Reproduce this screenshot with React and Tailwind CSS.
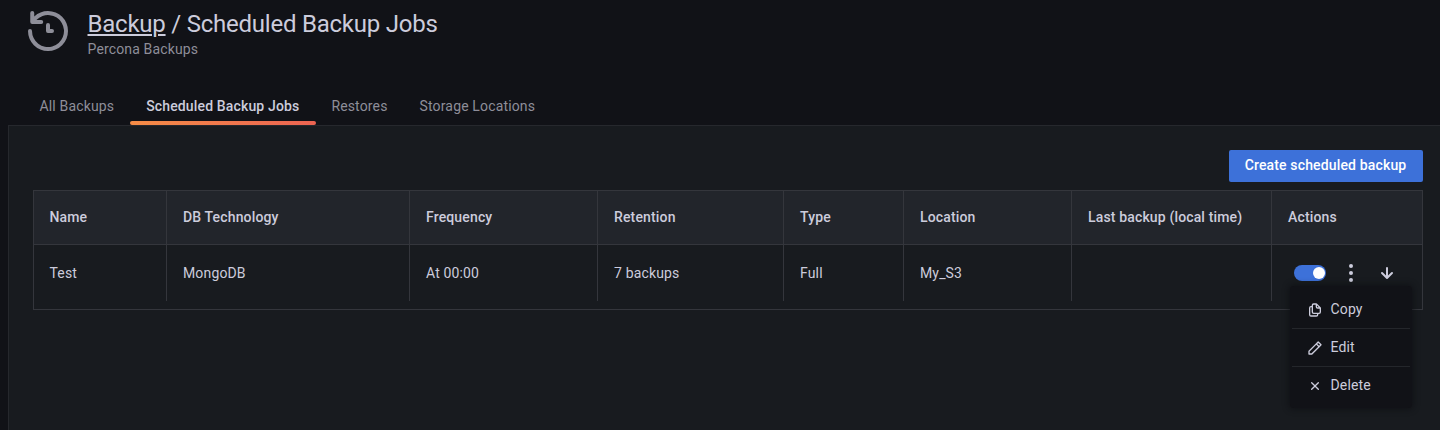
const paths = {
  history:
    'M12,2A10,10,0,0,0,5.12,4.77V3a1,1,0,0,0-2,0V7.5a1,1,0,0,0,1,1H8.62a1,1,0,0,0,0-2H6.22A8,8,0,1,1,4,12a1,1,0,0,0-2,0A10,10,0,1,0,12,2Zm0,6a1,1,0,0,0-1,1v3a1,1,0,0,0,1,1h2a1,1,0,0,0,0-2H13V9A1,1,0,0,0,12,8Z',
  copy:
    'M21,8.94a1.31,1.31,0,0,0-.06-.27l0-.09a1.07,1.07,0,0,0-.19-.28h0l-6-6h0a1.07,1.07,0,0,0-.28-.19.32.32,0,0,0-.09,0A.88.88,0,0,0,14.05,2H10A3,3,0,0,0,7,5V6H6A3,3,0,0,0,3,9V19a3,3,0,0,0,3,3h8a3,3,0,0,0,3-3V18h1a3,3,0,0,0,3-3V9S21,9,21,8.94ZM15,5.41,17.59,8H16a1,1,0,0,1-1-1ZM15,19a1,1,0,0,1-1,1H6a1,1,0,0,1-1-1V9A1,1,0,0,1,6,8H7v7a3,3,0,0,0,3,3h5Zm4-4a1,1,0,0,1-1,1H10a1,1,0,0,1-1-1V5a1,1,0,0,1,1-1h3V7a3,3,0,0,0,3,3h3Z',
  pen:
    'M22,7.24a1,1,0,0,0-.29-.71L17.47,2.29A1,1,0,0,0,16.76,2a1,1,0,0,0-.71.29L13.22,5.12h0L2.29,16.05a1,1,0,0,0-.29.71V21a1,1,0,0,0,1,1H7.24A1,1,0,0,0,8,21.71L18.87,10.78h0L21.71,8a1.19,1.19,0,0,0,.22-.33,1,1,0,0,0,0-.24.7.7,0,0,0,0-.14ZM6.83,20H4V17.17l9.93-9.93,2.83,2.83ZM18.17,8.66,15.34,5.83l1.42-1.41,2.82,2.82Z',
  times:
    'M13.41,12l4.3-4.29a1,1,0,1,0-1.42-1.42L12,10.59,7.71,6.29A1,1,0,0,0,6.29,7.71L10.59,12l-4.3,4.29a1,1,0,0,0,0,1.42,1,1,0,0,0,1.42,0L12,13.41l4.29,4.3a1,1,0,0,0,1.42,0,1,1,0,0,0,0-1.42Z',
  ellipsis: 'M12,3a2,2,0,1,0,2,2A2,2,0,0,0,12,3Zm0,7a2,2,0,1,0,2,2A2,2,0,0,0,12,10Zm0,7a2,2,0,1,0,2,2A2,2,0,0,0,12,17Z',
  arrowDown:
    'M17.71,11.29a1,1,0,0,0-1.42,0L13,14.59V7a1,1,0,0,0-2,0v7.59l-3.29-3.3a1,1,0,0,0-1.42,1.42l5,5a1,1,0,0,0,.33.21.94.94,0,0,0,.76,0,1,1,0,0,0,.33-.21l5-5A1,1,0,0,0,17.71,11.29Z',
};

function Icon({ name, className }) {
  return (
    <svg viewBox="0 0 24 24" fill="currentColor" aria-hidden="true" className={className}>
      <path d={paths[name]} />
    </svg>
  );
}

const tabs = ['All Backups', 'Scheduled Backup Jobs', 'Restores', 'Storage Locations'];

const columns = [
  ['Name', 'Test'],
  ['DB Technology', 'MongoDB'],
  ['Frequency', 'At 00:00'],
  ['Retention', '7 backups'],
  ['Type', 'Full'],
  ['Location', 'My_S3'],
  ['Last backup (local time)', ''],
];

const menu = [
  ['copy', 'Copy'],
  ['pen', 'Edit'],
  ['times', 'Delete'],
];

const grid = 'grid grid-cols-[133px_243px_188px_186px_120px_168px_200px_150px]';

function Header() {
  return (
    <header className="flex h-[87px] pl-6 pt-[7px]">
      <Icon name="history" className="size-12 text-[#8e8e99]" />
      <div className="ml-[15.5px]">
        <h1 className="pt-px text-[24px] leading-[32px] tracking-[-0.23px] text-[#ccccdc]">
          <a className="underline decoration-[2px] underline-offset-[2px]">Backup</a> / Scheduled Backup Jobs
        </h1>
        <div className="text-sm leading-[18px] tracking-[0.15px] text-[#8e8e99]">Percona Backups</div>
      </div>
    </header>
  );
}

function Tabs() {
  return (
    <nav className="flex h-[38px] pl-[23.5px]">
      {tabs.map((tab, i) => (
        <div
          key={tab}
          className={`relative px-4 pt-[9px] text-sm leading-5 tracking-[0.15px] ${
            i === 1 ? 'font-medium text-[#ccccdc]' : 'text-[#8e8e99]'
          }`}
        >
          {tab}
          {i === 1 && (
            <span className="absolute -right-px bottom-0 left-0 h-1 rounded-sm bg-linear-to-r from-[#f58c46] to-[#ec6351]" />
          )}
        </div>
      ))}
    </nav>
  );
}

function ActionsMenu() {
  return (
    <div className="absolute left-[18px] top-[41px] h-[122px] w-[122px] rounded-[4px] bg-[#111217] px-0.5 pt-[5px] shadow-[0_0_6px_1px_rgba(12,13,17,0.75)]">
      {menu.map(([icon, label], i) => (
        <div
          key={label}
          className={`flex h-[38px] items-center gap-[7.5px] pl-[15px] ${i < 2 ? 'border-b border-[#24262b]' : ''}`}
        >
          <Icon name={icon} className="size-4" />
          <span className="-mt-0.5">{label}</span>
        </div>
      ))}
    </div>
  );
}

export default function App() {
  return (
    <div className="flex h-[430px] flex-col overflow-hidden bg-[#111217] font-[Roboto,sans-serif] text-sm text-[#ccccdc]">
      <Header />
      <Tabs />
      <main className="ml-2 flex-1 border-l border-t border-[#26282d] bg-[#181b1f] pl-6 pr-[17px] pt-6 tracking-[0.15px]">
        <div className="flex justify-end">
          <button className="h-8 w-[194px] rounded-[2px] bg-[#3d71d9] pb-0.5 pr-px font-medium text-white">
            Create scheduled backup
          </button>
        </div>
        <section className="mt-2 h-[120px] border border-[#34363c]">
          <div className={`${grid} h-[54px] border-b border-[#34363c] bg-[#22252b] font-medium`}>
            {columns.map(([head]) => (
              <div
                key={head}
                className="flex items-center whitespace-nowrap border-r border-[#34363c] pb-0.5 pl-4 first:pl-[15.5px]"
              >
                {head}
              </div>
            ))}
            <div className="flex items-center pb-0.5 pl-4">Actions</div>
          </div>
          <div className={`${grid} h-14`}>
            {columns.map(([head, value]) => (
              <div key={head} className="flex items-center border-r border-[#34363c] pl-4 first:pl-[15.5px]">
                {value}
              </div>
            ))}
            <div className="relative flex items-center pl-[22px]">
              <span className="flex h-4 w-8 items-center justify-end rounded-full bg-[#3d71d9] pr-px">
                <span className="size-3 rounded-full bg-white" />
              </span>
              <Icon name="ellipsis" className="ml-[13px] size-6" />
              <Icon name="arrowDown" className="ml-3 size-6" />
              <ActionsMenu />
            </div>
          </div>
        </section>
      </main>
    </div>
  );
}
